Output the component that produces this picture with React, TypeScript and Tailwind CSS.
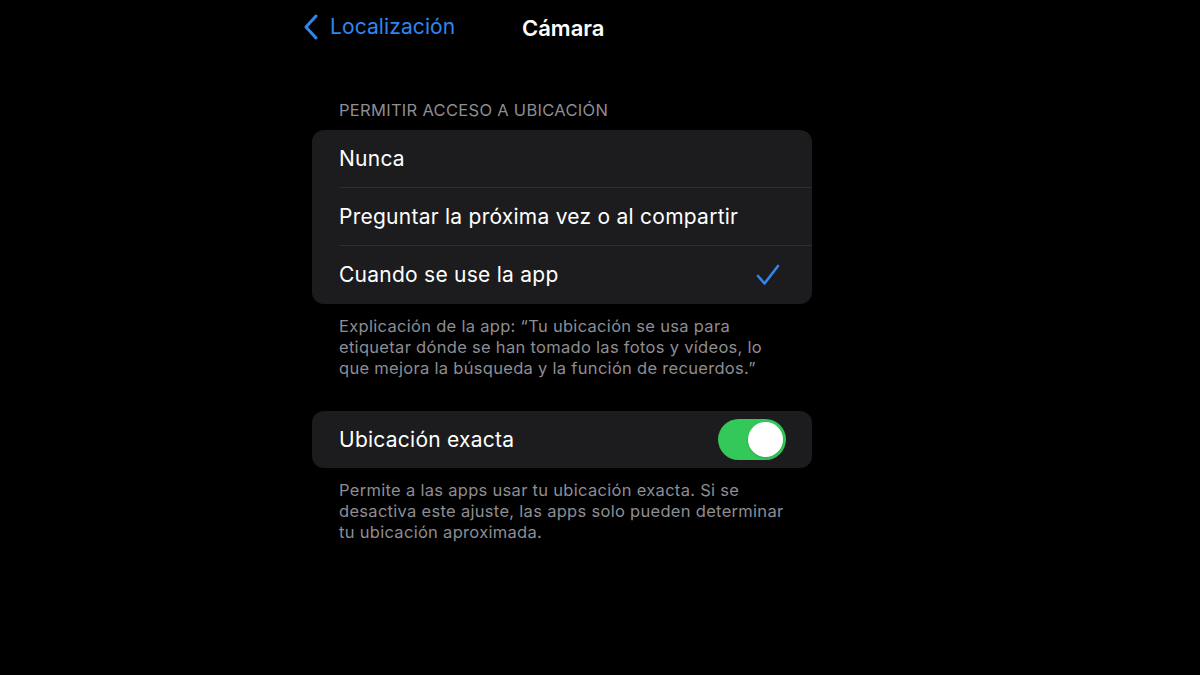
import React from "react";

const font = { fontFamily: "Inter, 'Noto Sans', sans-serif" };

function Chevron() {
  return (
    <svg width="16" height="26" viewBox="0 0 16 26" fill="none">
      <path d="M13 2L3 13l10 11" stroke="#2f86ee" strokeWidth="3" strokeLinecap="round" strokeLinejoin="round" />
    </svg>
  );
}

function Check() {
  return (
    <svg width="24" height="22" viewBox="0 0 24 22" fill="none">
      <path d="M2 12l6.5 7.5L22 2" stroke="#2f86ee" strokeWidth="2.6" strokeLinecap="round" strokeLinejoin="round" />
    </svg>
  );
}

function Toggle() {
  return (
    <div className="flex h-[41px] w-[68px] items-center justify-end rounded-full bg-[#34c759] p-[3px]">
      <div className="h-[35px] w-[35px] rounded-full bg-white shadow" />
    </div>
  );
}

const options = ["Nunca", "Preguntar la próxima vez o al compartir", "Cuando se use la app"];

export default function App() {
  return (
    <div className="h-[675px] w-[1200px] overflow-hidden bg-black text-white" style={font}>
      <div className="ml-[312px] w-[500px]">
        <div className="relative flex h-[54px] items-center">
          <div className="ml-[-9px] flex items-center gap-[11px] text-[21px] tracking-[0.1px] text-[#2f86ee]">
            <Chevron />
            <span>Localización</span>
          </div>
          <div className="absolute left-[210px] top-[12px] text-[22px] font-semibold">Cámara</div>
        </div>

        <div className="mt-[46px] pl-[27px] text-[16.5px] leading-5 tracking-[0.3px] text-[#8d8d93]">
          PERMITIR ACCESO A UBICACIÓN
        </div>

        <div className="mt-[10px] rounded-[12px] bg-[#1c1c1e]">
          {options.map((label, i) => (
            <div key={label} className="flex h-[58px] items-center pl-[27px]">
              <div
                className={
                  "flex h-full flex-1 items-center justify-between pr-[32px] " +
                  (i < options.length - 1 ? "border-b border-[#2e2e31]" : "")
                }
              >
                <span className="text-[21px] tracking-[0.25px]">{label}</span>
                {i === 2 && <Check />}
              </div>
            </div>
          ))}
        </div>

        <p className="mt-[12px] pl-[27px] pr-[40px] text-[16.5px] leading-[21px] tracking-[0.3px] text-[#8d8d93]">
          Explicación de la app: “Tu ubicación se usa para etiquetar dónde se han tomado las fotos y vídeos, lo que
          mejora la búsqueda y la función de recuerdos.”
        </p>

        <div className="mt-[32px] flex h-[57px] items-center justify-between rounded-[12px] bg-[#1c1c1e] pl-[27px] pr-[26px]">
          <span className="text-[21px] tracking-[0.25px]">Ubicación exacta</span>
          <Toggle />
        </div>

        <p className="mt-[12px] pl-[27px] pr-[16px] text-[16.5px] leading-[21px] tracking-[0.3px] text-[#8d8d93]">
          Permite a las apps usar tu ubicación exacta. Si se desactiva este ajuste, las apps solo pueden determinar tu
          ubicación aproximada.
        </p>
      </div>
    </div>
  );
}
